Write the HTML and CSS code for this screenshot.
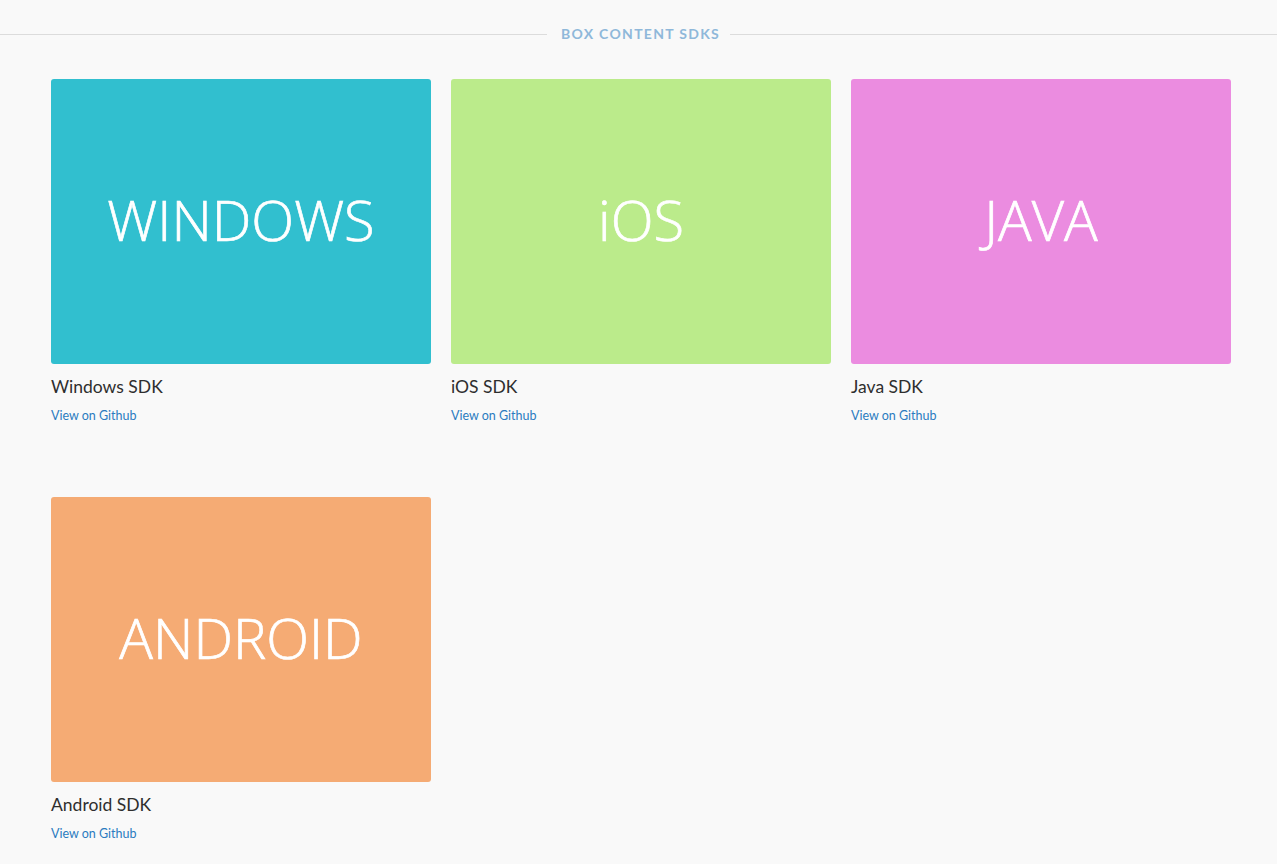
FILE: index.html
```html
<!DOCTYPE html>
<html>
  <head>
    <meta charset="utf-8" />
    <title>Box Content SDKs</title>
    <link rel="stylesheet" href="styles.css">
  </head>
  <body>
    <div class="section-title">
      <span>BOX CONTENT SDKS</span>
    </div>

    <div class="sdk-grid">
      <!-- Windows -->
      <div class="sdk-card">
        <div class="sdk-banner windows">WINDOWS</div>
        <div class="sdk-name">Windows SDK</div>
        <a class="sdk-link" href="#">View on Github</a>
      </div>

      <!-- iOS -->
      <div class="sdk-card">
        <div class="sdk-banner ios">iOS</div>
        <div class="sdk-name">iOS SDK</div>
        <a class="sdk-link" href="#">View on Github</a>
      </div>

      <!-- Java -->
      <div class="sdk-card">
        <div class="sdk-banner java">JAVA</div>
        <div class="sdk-name">Java SDK</div>
        <a class="sdk-link" href="#">View on Github</a>
      </div>

      <!-- Android -->
      <div class="sdk-card">
        <div class="sdk-banner android">ANDROID</div>
        <div class="sdk-name">Android SDK</div>
        <a class="sdk-link" href="#">View on Github</a>
      </div>
    </div>
  </body>
</html>
```

FILE: styles.css
```css
* {
  margin: 0;
  padding: 0;
  box-sizing: border-box;
}

body {
  font-family: Lato, "Open Sans", "Liberation Sans", sans-serif;
  background-color: #f9f9f9;
  color: #333;
}

.section-title {
  display: flex;
  align-items: center;
  gap: 10px;
  padding-top: 24px;
}

.section-title:before,
.section-title:after {
  content: "";
  flex: 1;
  height: 1px;
  background-color: #dcdcdc;
}

.section-title span {
  font-size: 14px;
  font-weight: bold;
  letter-spacing: 1.3px;
  color: #8fb8da;
  line-height: 20px;
  margin-left: 4px;
}

.sdk-grid {
  display: grid;
  grid-template-columns: repeat(3, 380px);
  column-gap: 20px;
  row-gap: 0;
  padding: 35px 0 0 51px;
}

.sdk-card {
  height: 418px;
}

.sdk-banner {
  height: 285px;
  border-radius: 3px;
  display: flex;
  align-items: center;
  justify-content: center;
  color: #fff;
  font-family: "Open Sans", Lato, sans-serif;
  font-weight: 300;
  font-size: 56px;
  -webkit-text-stroke: 0.7px #fff;
  padding-bottom: 6px;
}

.windows {
  background-color: #31bfcf;
}

.ios {
  background-color: #bbeb8b;
}

.java {
  background-color: #eb8ce0;
}

.android {
  background-color: #f5ab74;
}

.sdk-name {
  font-size: 17.5px;
  margin-top: 12px;
  line-height: 22px;
  color: #2e2e2e;
}

.sdk-link {
  display: block;
  margin-top: 10px;
  font-size: 12.5px;
  color: #2b7bc0;
  text-decoration: none;
}
```
